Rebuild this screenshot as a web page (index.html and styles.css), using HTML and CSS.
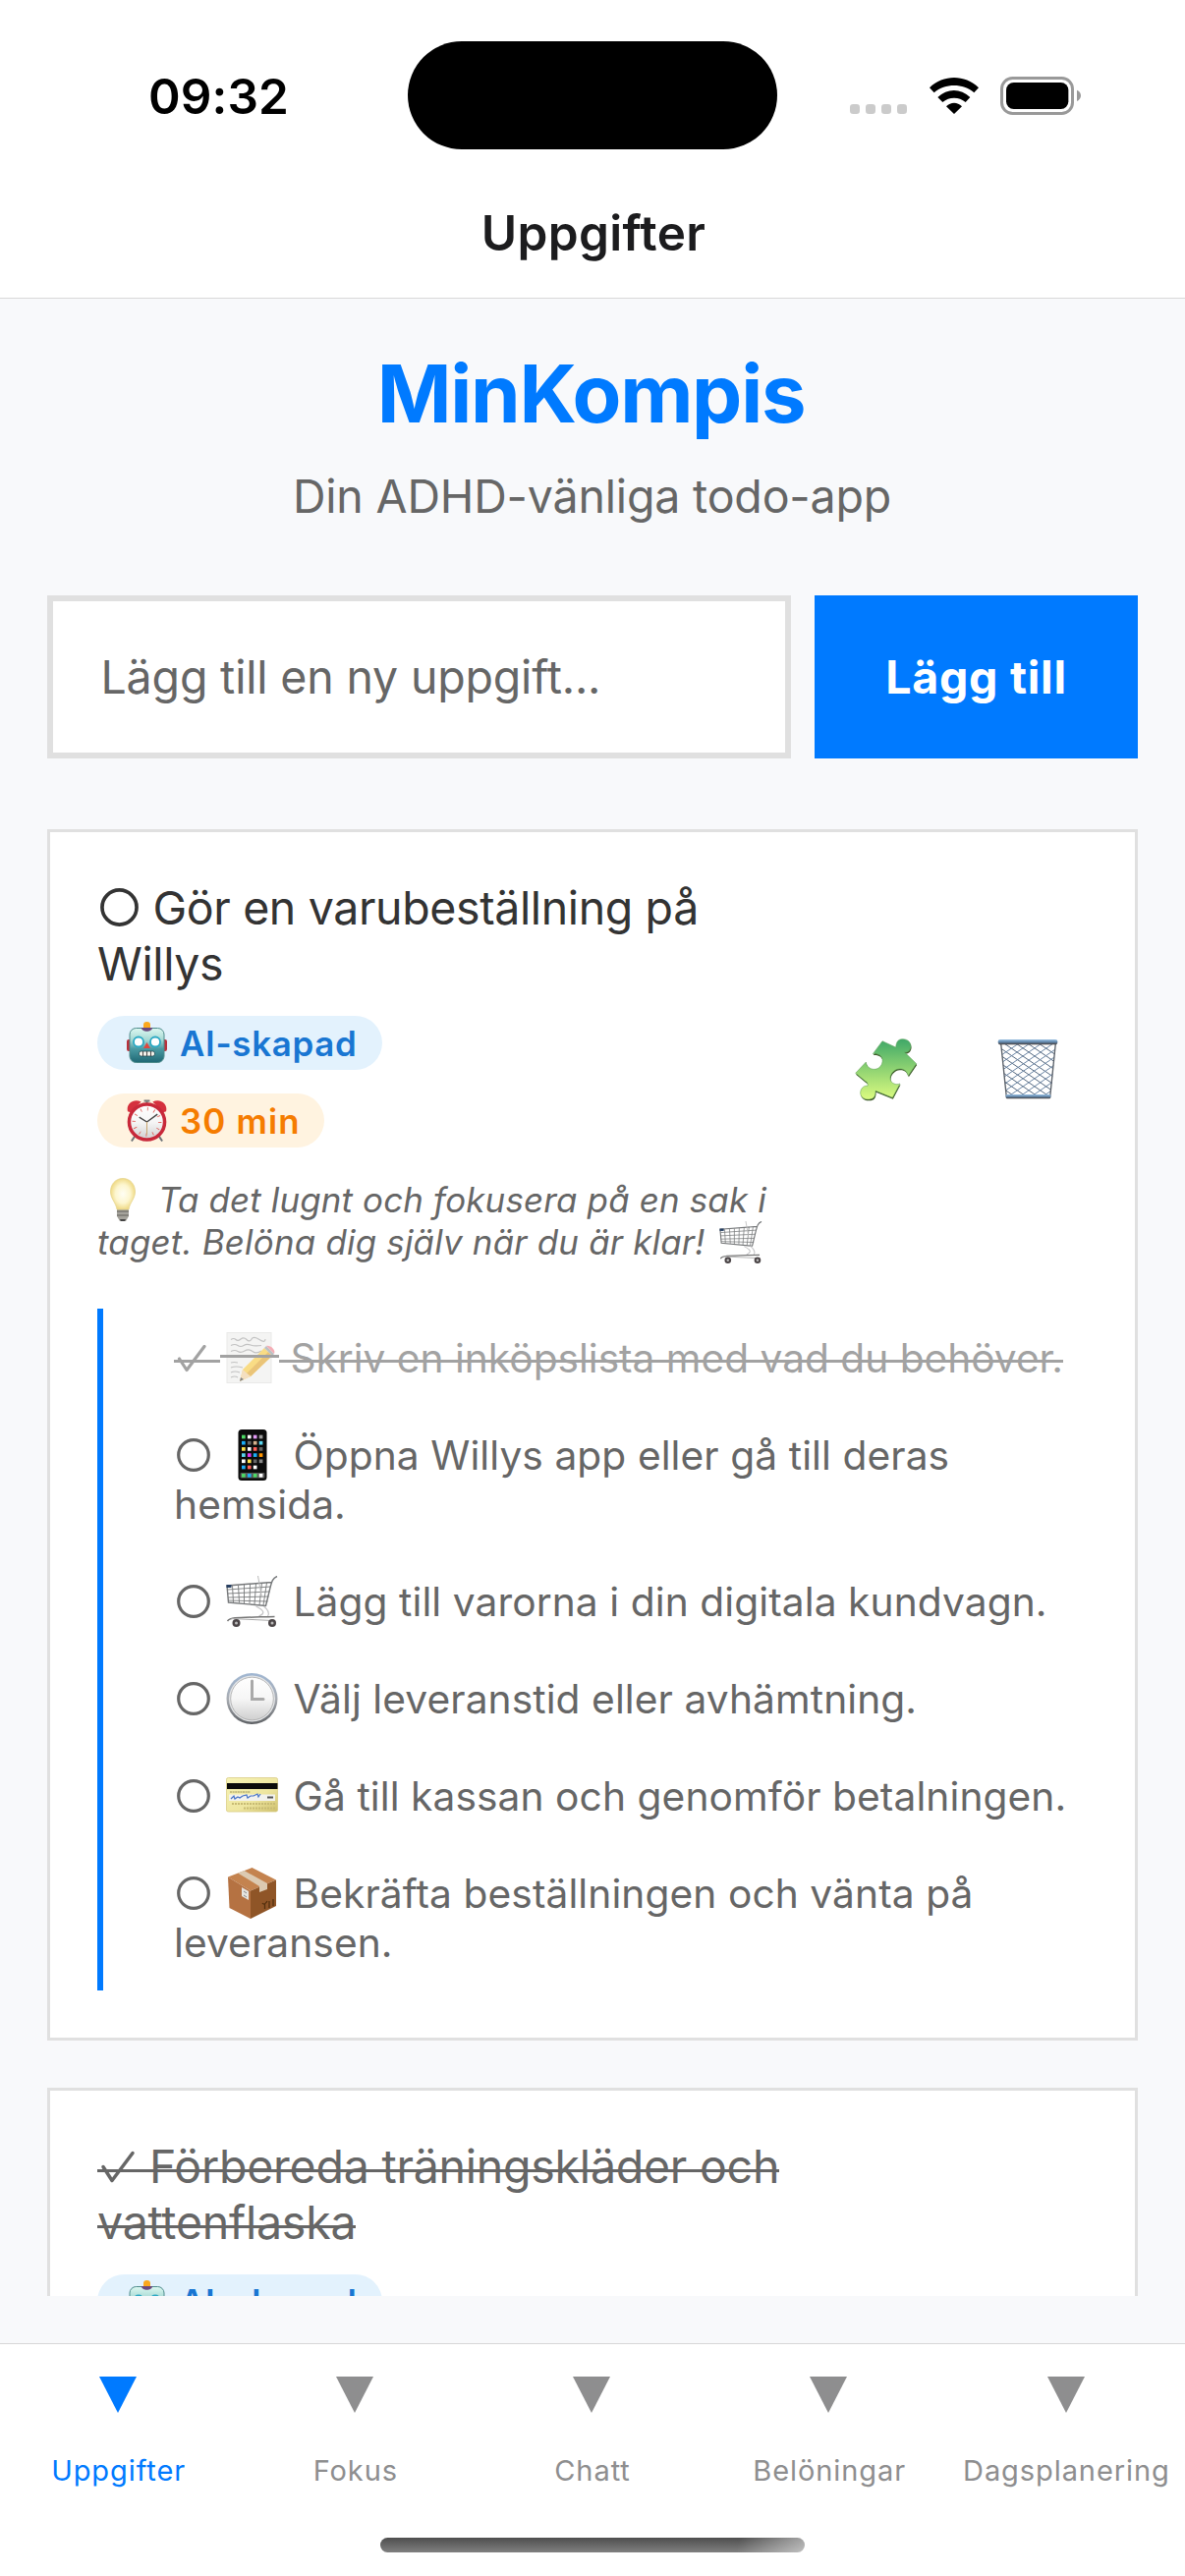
FILE: index.html
```html
<!DOCTYPE html>
<html lang="sv">
<head>
<meta charset="utf-8">
<title>MinKompis</title>
<link rel="stylesheet" href="styles.css">
</head>
<body>
<svg class="defs" width="0" height="0" aria-hidden="true">
  <defs>
    <linearGradient id="robotSkin" x1="0" y1="0" x2="0" y2="1"><stop offset="0" stop-color="#dcf8f1"/><stop offset=".35" stop-color="#a5d8d3"/><stop offset=".6" stop-color="#4a9aa3"/><stop offset="1" stop-color="#1f6874"/></linearGradient>
    <linearGradient id="puzzleSkin" x1="0" y1="0" x2="0" y2="1"><stop offset="0" stop-color="#3fa868"/><stop offset=".5" stop-color="#8fd372"/><stop offset="1" stop-color="#dcfb80"/></linearGradient>
    <linearGradient id="rim" x1="0" y1="0" x2="0" y2="1"><stop offset="0" stop-color="#9cc3e6"/><stop offset=".5" stop-color="#5f84a8"/><stop offset="1" stop-color="#463c38"/></linearGradient>
    <linearGradient id="silver" x1="0" y1="0" x2="0" y2="1"><stop offset="0" stop-color="#9fb6d2"/><stop offset=".5" stop-color="#a9adb3"/><stop offset="1" stop-color="#5f6266"/></linearGradient>
    <linearGradient id="dial" x1="0" y1="0" x2="0" y2="1"><stop offset="0" stop-color="#fff"/><stop offset=".5" stop-color="#f6f6f6"/><stop offset="1" stop-color="#cfcfcf"/></linearGradient>
    <linearGradient id="cardSkin" x1="0" y1="0" x2="1" y2="1"><stop offset="0" stop-color="#f7f3b4"/><stop offset=".6" stop-color="#eee6a0"/><stop offset="1" stop-color="#cfc06c"/></linearGradient>
    <radialGradient id="glow" cx=".5" cy=".5" r=".5"><stop offset="0" stop-color="#fffef4"/><stop offset=".6" stop-color="#fdf6cf"/><stop offset="1" stop-color="#f0db88"/></radialGradient>
    <clipPath id="binBody"><path d="M595 130L762 130L747 292L611 292Z"/></clipPath>
    <path id="piece" d="M233 120L274 139C276 118 284 114 296 114C312 114 321 126 320 138C318 152 307 156 301 154L337 189L312 226C308 212 298 204 285 205C268 206 256 222 257 236C260 250 275 255 287 250L264 293L212 272C213 289 206 298 192 298C174 299 165 288 166 276C168 262 178 255 188 257C190 248 185 245 180 242L151 218L183 184C184 196 194 206 208 206C224 206 235 192 233 176C230 162 216 158 204 159Z"/>
    <symbol id="robot" viewBox="0 0 41 42">
      <rect x="0" y="18" width="5" height="12" rx="2" fill="#b8313c"/><rect x="36" y="18" width="5" height="12" rx="2" fill="#b8313c"/>
      <rect x="3" y="6.5" width="35" height="35" rx="6.5" fill="url(#robotSkin)" stroke="#4f8c8c" stroke-width="1"/>
      <path d="M15 6h11c0 5-11 5-11 0z" fill="#6b4a7e"/><path d="M17 6V3a3.500 3 0 0 1 7 0v3z" fill="#fba81d"/>
      <circle cx="12" cy="20.500" r="5" fill="#fff" stroke="#2ba9c4" stroke-width="1.800"/><circle cx="29" cy="20.500" r="5" fill="#fff" stroke="#2ba9c4" stroke-width="1.800"/>
      <path d="M20.500 21l3.500 6h-7z" fill="#e0473f"/>
      <rect x="12.500" y="30" width="16" height="5" rx="2" fill="#f3f1ea" stroke="#1c4d56" stroke-width=".8"/><path d="M16.500 30v5M20.500 30v5M24.500 30v5" stroke="#4b4b4b"/>
    </symbol>
    <symbol id="alarm" viewBox="0 0 42 43">
      <path d="M9 37l-4 6M33 37l4 6" stroke="#6d7378" stroke-width="2"/>
      <path d="M1 12C-1 4 7-2 15 2L4 13zM41 12C43 4 35-2 27 2l11 11z" fill="#d5303e"/>
      <path d="M18 1h6M21 1v4" stroke="#777" stroke-width="2"/>
      <circle cx="21" cy="23" r="18.500" fill="url(#dial)" stroke="#c8283a" stroke-width="3.600"/>
      <circle cx="21" cy="23" r="13.500" fill="none" stroke="#e0645f" stroke-width="3.500" stroke-dasharray=".9 6.169"/>
      <path d="M13 18l8 5 11-8" fill="none" stroke="#444" stroke-width="1.400"/><path d="M21 23v13" stroke="#c9a36a"/>
    </symbol>
    <symbol id="cart" viewBox="0 0 52 52">
      <g fill="none" stroke="#77797b">
        <path d="M51.500.5C47 2 46 6 44.500 12L40 30.500 2 27 .5 10 46 6.500" stroke-width="1.400"/>
        <path d="M1 14l44-3M1.500 18l42.500-2M1.500 22l41.500-1M2 25l40 1M6 10l1 17M12 9.500l1 18M18 9l0 19M24 8.500l-.5 20M30 8l-1.500 21M36 7.500L33.500 30M41 7l-3.500 23" stroke-width=".9"/>
        <path d="M32 0l4 22" stroke="#bbb"/>
        <path d="M30 31c8 4 10 7 3 10M38 31c5 4 6 7 4 10" stroke="#c6c6c8" stroke-width="1.300"/>
        <path d="M1 46c3-4 8-3.500 48-4.500" stroke="#777" stroke-width="1.500"/><path d="M5 43.500l42 2" stroke="#aaa"/>
      </g>
      <path d="M0 9h5v3H0z" fill="#273f62"/>
      <circle cx="10" cy="48" r="4" fill="#4b4547"/><circle cx="46.500" cy="48" r="4" fill="#4b4547"/><circle cx="10" cy="48" r="1.500" fill="#bbb"/><circle cx="46.500" cy="48" r="1.500" fill="#bbb"/>
    </symbol>
    <symbol id="ring" viewBox="0 0 34 34"><circle cx="17" cy="17" r="15.300" fill="none" stroke="currentColor" stroke-width="3.200"/></symbol>
    <symbol id="tri" viewBox="0 0 38 37"><path d="M0 0h38L19 37z" fill="currentColor"/></symbol>
  </defs>
</svg>

<div class="screen">
  <header class="top">
    <div class="status">
      <div class="time">09:32</div>
      <div class="island"></div>
      <div class="signals">
        <svg class="dots" width="58" height="10" viewBox="0 0 58 10" fill="#cbcbcb"><rect width="10" height="10" rx="3.300"/><rect x="16" width="10" height="10" rx="3.300"/><rect x="32" width="10" height="10" rx="3.300"/><rect x="48" width="10" height="10" rx="3.300"/></svg>
        <svg class="wifi" width="50" height="37" viewBox="287 57 150 111"><path d="M287 88C329 47 395 47 437 88L423 103C389 74 335 74 301 103ZM312 117C341 89 382 89 411 117L397 132C377 115 347 115 327 132ZM338 145C352 131 372 131 386 145L362 168Z"/></svg>
        <svg class="battery" width="82" height="39" viewBox="504 54 246 117"><rect x="508.500" y="58.500" width="216" height="108" rx="33" fill="none" stroke="#999" stroke-width="9"/><rect x="522" y="72" width="190" height="81" rx="23"/><path d="M738 95c16 6 16 28 0 34z" fill="#999"/></svg>
      </div>
    </div>
    <div class="nav-title">Uppgifter</div>
  </header>

  <main class="content">
    <h1 class="brand">MinKompis</h1>
    <p class="tagline">Din ADHD-vänliga todo-app</p>
    <div class="add">
      <div class="field">Lägg till en ny uppgift...</div>
      <div class="add-btn">Lägg till</div>
    </div>

    <div class="list">
      <article class="card">
        <div class="row">
          <div class="info">
            <div class="title"><svg class="open" width="39" height="39"><use href="#ring"/></svg>Gör en varubeställning på<br>Willys</div>
            <div class="badge ai"><svg width="41" height="42"><use href="#robot"/></svg><span>AI-skapad</span></div>
            <div class="badge mins"><svg width="42" height="43"><use href="#alarm"/></svg><span>30 min</span></div>
            <div class="tip"><svg class="bulb" width="62" height="44" viewBox="0 0 62 44"><path d="M20 30h12v9l-3 5h-6l-3-5z" fill="#a5a39c"/><path d="M20 34h12M20 38h12" stroke="#65625c" stroke-width="1.200"/><path d="M23 42h6l-1 2h-4z" fill="#444"/><path d="M26 .5C18 .5 13.500 7 13.500 14S19 25 20 32h12c1-7 6.500-11 6.500-18S34 .5 26 .5z" fill="url(#glow)" stroke="#e6d48e" stroke-width=".8"/></svg>Ta det lugnt och fokusera på en sak i<br><span class="wide">taget. Belöna dig själv när du är klar!</span><svg class="trolley" width="44" height="43" preserveAspectRatio="none"><use href="#cart"/></svg></div>
          </div>
          <div class="actions">
            <div class="action"><svg width="64" height="64" viewBox="149 112 192 192"><use href="#piece" x="1.500" y="4" fill="#3b5526"/><use href="#piece" fill="url(#puzzleSkin)" stroke="#5c9a54" stroke-width="1.500"/></svg></div>
            <div class="action"><svg width="62" height="62" viewBox="584 115 186 186"><g clip-path="url(#binBody)" fill="none" stroke="#55687f" stroke-width="3"><path d="M540 130l220 150M565 125l210 143M590 120l200 136M620 116l180 122M650 112l150 102M680 110l120 80M540 154l220 150M540 178l220 150M540 202l220 150M540 226l220 150M540 250l220 150"/><path d="M820 130L600 280M795 125L585 268M770 120L570 256M740 116L560 238M710 112L560 214M680 110L560 190M820 154L600 304M820 178L600 328M820 202L600 352M820 226L600 376M820 250L600 400" stroke="#6b86a5"/></g><path d="M595 130L612 294M762 130L745 294" stroke="#5a6068" stroke-width="4"/><rect x="610" y="286" width="137" height="13" rx="4" fill="url(#rim)"/><rect x="586" y="118" width="182" height="16" rx="7" fill="url(#rim)"/></svg></div>
          </div>
        </div>
        <ul class="steps">
          <li class="done"><span class="cross"><svg class="tick" width="47" height="28" viewBox="0 0 47 28"><path d="M5.500 14l7.500 11.500L31 1.500" fill="none" stroke="#666" stroke-width="3.200" stroke-linecap="round" stroke-linejoin="round"/></svg></span><svg class="emoji memo" width="60" height="52" viewBox="0 0 60 52"><rect x="7" y=".5" width="45" height="51" fill="#eeeeec" stroke="#dcdcda"/><path d="M11 7.500q3-2 5 0t5-.5 6 .5 5-.5 8 .5 6-.5M11 13.500q4-2 7 0t6 0 7-.5 11 .5M11 19.500q4-2 7 0t7-.5 8 .5 9-.5M11 25.500h27M11 31q3-1 7 0M11 36q5-2 12 0M11 41q4-2 9 0M11 46q4-2 7 0" fill="none" stroke="#9b9b9b" stroke-width="1.200"/><path d="M20 50l3-12L45 16l8 8-22 21z" fill="#f6c535"/><path d="M27 42L49 20l4 4-22 21z" fill="#dd9d20"/><path d="M45 16l2-2 8 8-2 2z" fill="#8f989e"/><path d="M47 14c4-1 10 4 8 8z" fill="#ee7a86"/><path d="M20 50l3-12 8 7z" fill="#edca97"/><path d="M20 50l1-4 3 2z" fill="#333"/><rect y="23" width="60" height="3" fill="#666"/></svg><span class="cross text">&nbsp;Skriv en inköpslista med vad du behöver.</span></li>
          <li><svg class="open" width="34" height="34"><use href="#ring"/></svg><svg class="emoji" width="53" height="52" viewBox="0 0 53 52"><rect x="12.500" width="29" height="52" rx="3.500" fill="#0b0b0b"/><g stroke-width="3.700" fill="none"><path d="M16 7.500h3.700" stroke="#4cd964"/><path d="M21.900 7.500h3.700" stroke="#fff"/><path d="M27.800 7.500h3.700" stroke="#e29bf5"/><path d="M33.700 7.500h3.700" stroke="#999"/><path d="M16 13.700h3.700" stroke="#1badf8"/><path d="M21.900 13.700h3.700" stroke="#666"/><path d="M27.800 13.700h3.700" stroke="#d6b28d"/><path d="M33.700 13.700h3.700" stroke="#5ad5ef"/><path d="M16 19.900h3.700" stroke="#ffe14a"/><path d="M21.900 19.900h3.700" stroke="#fff"/><path d="M27.800 19.900h3.700" stroke="#ff6259"/><path d="M33.700 19.900h3.700" stroke="#666"/><path d="M16 26.100h3.700" stroke="#5ad5ef"/><path d="M21.900 26.100h3.700" stroke="#e13bf0"/><path d="M27.800 26.100h3.700" stroke="#1badf8"/><path d="M33.700 26.100h3.700" stroke="#ff9500"/><path d="M16 32.300h3.700" stroke="#fff"/><path d="M21.900 32.300h3.700" stroke="#ffe14a"/><path d="M27.800 32.300h3.700" stroke="#666"/><path d="M33.700 32.300h3.700" stroke="#888"/><path d="M16 38.500h3.700" stroke="#1badf8"/><path d="M21.900 38.500h3.700" stroke="#ff6259"/><path d="M27.800 38.500h3.700" stroke="#fff"/></g><rect x="14.500" y="44" width="25" height="5.500" rx="1" fill="#555"/><g><path d="M16 45h3.700v3.700H16z" fill="#4cd964"/><path d="M21.900 45h3.700v3.700h-3.700z" fill="#1badf8"/><path d="M27.800 45h3.700v3.700h-3.700z" fill="#4cd964"/><path d="M33.700 45h3.700v3.700h-3.700z" fill="#fff"/></g></svg>Öppna Willys app eller gå till deras<br>hemsida.</li>
          <li><svg class="open" width="34" height="34"><use href="#ring"/></svg><svg class="emoji" width="53" height="52"><use href="#cart"/></svg>Lägg till varorna i din digitala kundvagn.</li>
          <li><svg class="open" width="34" height="34"><use href="#ring"/></svg><svg class="emoji" width="53" height="52" viewBox="0 0 53 52"><circle cx="26.500" cy="26" r="26" fill="url(#silver)"/><circle cx="26.500" cy="26" r="23.500" fill="#e4e6e8"/><circle cx="26.500" cy="26" r="21.800" fill="url(#dial)" stroke="#aaa" stroke-width=".8"/><path d="M26.500 8v18.500H38" fill="none" stroke="#a9a9a9" stroke-width="3" stroke-linecap="round"/></svg>Välj leveranstid eller avhämtning.</li>
          <li><svg class="open" width="34" height="34"><use href="#ring"/></svg><svg class="emoji" width="53" height="52" viewBox="0 0 53 52"><rect x=".4" y="7.500" width="52.200" height="34.500" rx="2" fill="url(#cardSkin)" stroke="#d8cc84" stroke-width=".8"/><rect x="1" y="13" width="51.500" height="6" fill="#0b0b0b"/><path d="M4 22h21" stroke="#9c9358" stroke-dasharray="2 .6"/><rect x="3" y="24.500" width="47" height="6.500" fill="#f2f2ee"/><path d="M5 29l3-3 1 3 3-2 2 1 3-2 4-1 1 3 3-2 3 0 4-2 1 3 2-3" fill="none" stroke="#4673c8" stroke-width="1.200"/><path d="M42 27.500h6" stroke="#555" stroke-width="2"/><path d="M6 34h44M18 38.500h32" stroke="#c8bb74" stroke-width="2" stroke-dasharray="2 1"/></svg>Gå till kassan och genomför betalningen.</li>
          <li><svg class="open" width="34" height="34"><use href="#ring"/></svg><svg class="emoji" width="53" height="52" viewBox="0 0 53 52"><path d="M2 9.500L26.500 0 51 12.500 25 23.500z" fill="#c4834f"/><path d="M2 9.500l23 14V52L3.500 41z" fill="#b57242"/><path d="M51 12.500V39L25 52V23.500z" fill="#8f5527"/><path d="M12 5.500L18.500 3 42 16v6l-8 3v-6z" fill="#dccab2"/><path d="M16 20l7 4v9l-7-4z" fill="#e6e4df"/><path d="M18 24l3 2M18 28l3 2" stroke="#888"/><path d="M37 36q2 3 5-2M39.500 37v5M44 34v7M48 32v7" stroke="#53300f" fill="none" stroke-width="1.300"/></svg>Bekräfta beställningen och vänta på<br>leveransen.</li>
        </ul>
      </article>

      <article class="card">
        <div class="title finished"><span class="cross"><svg class="tick" width="53" height="33" viewBox="0 0 53 33"><path d="M6 16.500L15 30.500 36 2.500" fill="none" stroke="#666" stroke-width="3.500" stroke-linecap="round" stroke-linejoin="round"/></svg>Förbereda träningskläder och<br>vattenflaska</span></div>
        <div class="badge ai"><svg width="41" height="42"><use href="#robot"/></svg><span>AI-skapad</span></div>
      </article>
    </div>
  </main>

  <footer class="tabbar">
    <nav class="tabs">
      <div class="tab active"><svg width="38" height="37"><use href="#tri"/></svg><span>Uppgifter</span></div>
      <div class="tab"><svg width="38" height="37"><use href="#tri"/></svg><span>Fokus</span></div>
      <div class="tab"><svg width="38" height="37"><use href="#tri"/></svg><span>Chatt</span></div>
      <div class="tab"><svg width="38" height="37"><use href="#tri"/></svg><span>Belöningar</span></div>
      <div class="tab"><svg width="38" height="37"><use href="#tri"/></svg><span>Dagsplanering</span></div>
    </nav>
    <div class="home"></div>
  </footer>
</div>
</body>
</html>
```
FILE: styles.css
```css
* { box-sizing: border-box; }
body { margin: 0; font-family: Inter, "Liberation Sans", sans-serif; }
h1, p, ul { margin: 0; padding: 0; list-style: none; }
.defs { display: block; height: 0; }

.screen { display: flex; flex-direction: column; width: 1206px; height: 2622px; overflow: hidden; background: #f8f9fb; white-space: nowrap; }

/* header */
.top { flex: none; height: 304px; background: #fff; border-bottom: 1px solid #d8d8d8; }
.status { display: grid; grid-template-columns: 415px 376px 1fr; height: 152px; padding-top: 41px; }
.time { padding: 27px 0 0 151px; font-size: 49.5px; font-weight: 600; line-height: 60px; letter-spacing: .1px; }
.island { height: 110.5px; margin-top: .5px; border-radius: 56px; background: #000; }
.signals { display: flex; align-items: flex-end; height: 76px; padding-left: 74px; }
.dots { margin: 0 22.7px 1px 0; }
.wifi { margin: 0 22.3px 1px 0; }
.nav-title { margin-top: 55px; text-align: center; font-size: 49.5px; font-weight: 600; line-height: 60px; letter-spacing: .34px; color: #1c1c1e; padding-left: 2px; }

/* page */
.content { display: flex; flex-direction: column; flex: 1; min-height: 0; padding: 47.4px 48px 48px; }
.brand { padding-right: 3px; font-size: 81.4px; font-weight: 700; line-height: 100px; letter-spacing: -1.29px; text-align: center; color: #007aff; }
.tagline { margin-top: 24.6px; padding-right: 1px; font-size: 46.5px; line-height: 58px; letter-spacing: -.18px; text-align: center; color: #666; }
.add { display: flex; gap: 24px; height: 166px; margin-top: 72px; flex: none; }
.field { flex: 1; padding-left: 48.5px; border: 6px solid #e0e0e0; background: #fff; font-size: 46.5px; line-height: 154px; letter-spacing: -.18px; color: #666; }
.add-btn { width: 329px; background: #007aff; color: #fff; font-size: 46.5px; font-weight: 700; line-height: 166px; letter-spacing: .75px; text-align: center; }
.list { flex: 1; min-height: 0; margin-top: 72px; overflow: hidden; }

/* task cards */
.card { padding: 48px; border: 3px solid #e0e0e0; background: #fff; margin-bottom: 48px; }
.row { display: flex; align-items: flex-start; justify-content: space-between; height: 389px; margin-bottom: 48px; }
.title { padding-top: 1px; margin-bottom: 23.4px; font-size: 46.5px; line-height: 57.3px; letter-spacing: -.38px; color: #333; }
.title .open { margin: 0 15px 0 2.5px; vertical-align: -2px; }
.finished { color: #666; letter-spacing: -.24px; }
.cross { background: linear-gradient(#666, #666) 0 26.4px / 100% 3px no-repeat; box-decoration-break: clone; -webkit-box-decoration-break: clone; }
.finished .cross { background-position: 0 31px; }

.badge { display: flex; align-items: center; height: 55px; padding-left: 30px; margin-bottom: 24px; border-radius: 28px; font-size: 34.9px; font-weight: 600; line-height: 55px; }
.badge svg { flex: none; width: 41px; margin-right: 13px; }
.badge span { padding-top: 2px; }
.ai { width: 290px; background: #e3f2fd; color: #1976d2; letter-spacing: .69px; }
.mins { width: 231px; background: #fff3e0; color: #f57c00; letter-spacing: 1.15px; }
.tip { margin-top: 31.8px; font-size: 34.9px; font-style: italic; line-height: 43px; letter-spacing: .15px; color: #666; }
.wide { letter-spacing: .21px; }
.tip svg { margin-block: -6px; vertical-align: -3px; }
.tip .trolley { margin-left: 15px; }

.actions { display: flex; align-self: center; gap: 21px; }
.action { display: flex; justify-content: center; width: 123px; }

/* subtasks */
.steps { padding-left: 72px; border-left: 6px solid #007aff; }
.steps li { padding: 26px 0 23px; font-size: 40.7px; line-height: 50px; letter-spacing: .08px; color: #666; }
.steps .open { margin: 0 16.5px 0 2.5px; vertical-align: -2px; }
.emoji { margin: -10px 15.5px -10px 0; vertical-align: -.7px; }
.steps .done { opacity: .6; }
.done .memo { margin-right: 0; }
.done .text { letter-spacing: -.02px; }

/* tab bar */
.tabbar { display: flex; flex-direction: column; align-items: center; flex: none; height: 237px; background: #fff; border-top: 1px solid #d8d8d8; }
.tabs { display: grid; grid-template-columns: repeat(5, 241.2px); padding-top: 33px; }
.tab { display: flex; flex-direction: column; align-items: center; color: #8e8e8f; font-size: 29px; line-height: 36px; letter-spacing: .92px; }
.tab svg { margin: 0 1.5px 40.5px 0; }
.active { color: #007aff; }
.home { width: 432px; height: 15px; margin-top: 50.5px; border-radius: 8px; background: linear-gradient(100deg, transparent 84%, rgba(255, 255, 255, .5)), linear-gradient(#4e4e4e, #808080); }
```
